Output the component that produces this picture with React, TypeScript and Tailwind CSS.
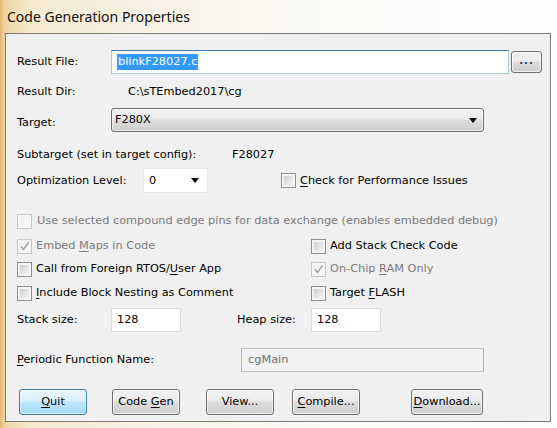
import React from "react";

function Box({ checked = false, disabled = false }: { checked?: boolean; disabled?: boolean }) {
  const outer = disabled
    ? "border-[#c7c7c7] bg-[#f4f4f4]"
    : "border-[#8e8f8f] bg-[#f4f4f4]";
  const inner = disabled
    ? "bg-[linear-gradient(135deg,#ececec,#fbfbfb)]"
    : "bg-[linear-gradient(135deg,#cfcfcf,#f5f5f5)]";
  return (
    <span className={`relative flex w-[15px] h-[15px] shrink-0 items-center justify-center border ${outer}`}>
      <span className={`w-[9px] h-[9px] ${inner}`} />
      {checked && (
        <svg className="absolute left-[1px] top-[1px]" width="11" height="11" viewBox="0 0 11 11">
          <path d="M2 5.5 L4.5 8.5 L9.5 1.5" fill="none" stroke="#a5a5a5" strokeWidth="1.6" />
        </svg>
      )}
    </span>
  );
}

function Arrow() {
  return (
    <svg width="8" height="5" viewBox="0 0 8 5">
      <path d="M0 0 H8 L4 5 Z" fill="#000" />
    </svg>
  );
}

function U({ children }: { children: React.ReactNode }) {
  return <span className="underline underline-offset-[2px]">{children}</span>;
}

const btn =
  "h-[26px] rounded-[3px] border border-[#707070] bg-[linear-gradient(#f2f2f2_0%,#ebebeb_45%,#dddddd_50%,#cfcfcf_100%)] shadow-[inset_0_0_0_1px_rgba(255,255,255,0.6)] flex items-center justify-center shrink-0";

export default function App() {
  return (
    <div className="w-[557px] h-[428px] overflow-hidden bg-[linear-gradient(90deg,#e0b56a_0px,#edd39e_4px,#f5e9d0_30px,#f9f3e8_160px,#fcfbf8_320px,#ffffff_557px)] font-['DejaVu_Sans',sans-serif] text-[11.3px] text-black leading-none">
      <div className="h-[33px] pl-[7px] flex items-center font-['Noto_Sans',sans-serif] text-[14px] text-[#111]">
        Code Generation Properties
      </div>
      <div className="ml-[5px] w-[546px] h-[389px] border border-[#7b7b7b] bg-[#f0f0f0] pl-[11px]">
        {/* Result File */}
        <div className="mt-[16px] h-[24px] flex items-center">
          <div className="w-[94px]">Result File:</div>
          <div className="w-[398px] h-[24px] border border-[#a4c9e3] border-t-[#3d7bad] bg-white flex items-center pl-[5px]">
            <span className="bg-[#3399ff] text-white leading-[16px] px-[1px]">blinkF28027.c</span>
          </div>
          <div className={`${btn} ml-[2px] w-[31px] !h-[22px]`}>
            <span className="text-[#1e395b] text-[10px] font-bold tracking-[1px] -mt-[2px]">...</span>
          </div>
        </div>
        {/* Result Dir */}
        <div className="mt-[6px] h-[24px] flex items-center">
          <div className="w-[111px]">Result Dir:</div>
          <div>{"C:\\sTEmbed2017\\cg"}</div>
        </div>
        {/* Target */}
        <div className="mt-[4px] h-[24px] flex items-center">
          <div className="w-[94px] mt-[6px]">Target:</div>
          <div className="w-[373px] h-[24px] rounded-[3px] border border-[#707070] bg-[linear-gradient(#f2f2f2_0%,#ebebeb_45%,#dddddd_50%,#cfcfcf_100%)] shadow-[inset_0_0_0_1px_rgba(255,255,255,0.6)] flex items-center justify-between pl-[3px] pr-[6px]">
            <span>F280X</span>
            <Arrow />
          </div>
        </div>
        {/* Subtarget */}
        <div className="mt-[11px] h-[24px] flex items-center">
          <div className="w-[215px]">Subtarget (set in target config):</div>
          <div>F28027</div>
        </div>
        {/* Optimization */}
        <div className="mt-[1px] h-[25px] flex items-center">
          <div className="w-[126px]">Optimization Level:</div>
          <div className="w-[65px] h-[25px] bg-white border border-[#e6e6e6] flex items-center justify-between pl-[5px] pr-[8px]">
            <span>0</span>
            <Arrow />
          </div>
          <div className="ml-[73px] flex items-center gap-[4px]">
            <Box />
            <span>
              <U>C</U>heck for Performance Issues
            </span>
          </div>
        </div>
        {/* Use selected */}
        <div className="mt-[18px] h-[20px] flex items-center gap-[5px] text-[#7a7a7a]">
          <Box disabled />
          <span>Use selected compound edge pins for data exchange (enables embedded debug)</span>
        </div>
        {/* Row 7 */}
        <div className="mt-[5px] h-[20px] flex items-center">
          <div className="w-[294px] flex items-center gap-[4px] text-[#7a7a7a]">
            <Box checked disabled />
            <span>
              Embed <U>M</U>aps in Code
            </span>
          </div>
          <div className="flex items-center gap-[4px]">
            <Box />
            <span>Add Stack Check Code</span>
          </div>
        </div>
        {/* Row 8 */}
        <div className="mt-[3px] h-[20px] flex items-center">
          <div className="w-[294px] flex items-center gap-[4px]">
            <Box />
            <span>
              Call from Foreign RTOS/<U>U</U>ser App
            </span>
          </div>
          <div className="flex items-center gap-[4px] text-[#7a7a7a]">
            <Box checked disabled />
            <span>
              On-Chip <U>R</U>AM Only
            </span>
          </div>
        </div>
        {/* Row 9 */}
        <div className="mt-[4px] h-[20px] flex items-center">
          <div className="w-[294px] flex items-center gap-[4px]">
            <Box />
            <span>
              <U>I</U>nclude Block Nesting as Comment
            </span>
          </div>
          <div className="flex items-center gap-[4px]">
            <Box />
            <span>
              Target <U>F</U>LASH
            </span>
          </div>
        </div>
        {/* Stack / Heap */}
        <div className="mt-[5px] h-[24px] flex items-center">
          <div className="w-[94px]">Stack size:</div>
          <div className="w-[70px] h-[24px] bg-white border border-[#dcdcdc] flex items-center pl-[5px]">128</div>
          <div className="ml-[56px] w-[74px]">Heap size:</div>
          <div className="w-[70px] h-[24px] bg-white border border-[#dcdcdc] flex items-center pl-[5px]">128</div>
        </div>
        {/* Periodic */}
        <div className="mt-[16px] h-[24px] flex items-center">
          <div className="w-[224px]">
            <U>P</U>eriodic Function Name:
          </div>
          <div className="w-[243px] h-[24px] bg-[#f2f2f2] border border-[#b8b8b8] flex items-center pl-[6px] text-[#707070]">
            cgMain
          </div>
        </div>
        {/* Buttons */}
        <div className="mt-[17px] h-[26px] flex items-center">
          <div className="ml-[2px] w-[68px] h-[26px] rounded-[3px] border border-[#3c7fb1] bg-[linear-gradient(#eaf6fd_0%,#d9f0fc_45%,#bee6fd_50%,#a7d9f5_100%)] shadow-[inset_0_0_0_1px_rgba(255,255,255,0.5)] flex items-center justify-center shrink-0">
            <span>
              <U>Q</U>uit
            </span>
          </div>
          <div className={`${btn} ml-[25px] w-[68px]`}>
            <span>
              Code <U>G</U>en
            </span>
          </div>
          <div className={`${btn} ml-[26px] w-[68px]`}>
            <span>View...</span>
          </div>
          <div className={`${btn} ml-[18px] w-[68px]`}>
            <span>
              <U>C</U>ompile...
            </span>
          </div>
          <div className={`${btn} ml-[51px] w-[72px]`}>
            <span>
              <U>D</U>ownload...
            </span>
          </div>
        </div>
      </div>
    </div>
  );
}
